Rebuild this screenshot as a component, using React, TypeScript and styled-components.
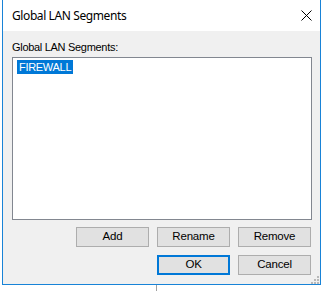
import React from "react";
import styled, { createGlobalStyle } from "styled-components";

const GlobalStyle = createGlobalStyle`
  html, body {
    margin: 0;
    padding: 0;
    background: #ffffff;
  }
`;

const Window = styled.div`
  box-sizing: border-box;
  margin-left: 2px;
  width: 319px;
  height: 285px;
  border: 1px solid #1883d7;
  border-top: none;
  display: flex;
  flex-direction: column;
  background: #f0f0f0;
`;

const TitleBar = styled.div`
  box-sizing: border-box;
  height: 31px;
  background: #ffffff;
  display: flex;
  align-items: center;
  justify-content: space-between;
  padding: 0 8px 1px 9px;
`;

const Title = styled.span`
  font-family: "Noto Sans", "Segoe UI", sans-serif;
  font-size: 12px;
  letter-spacing: -0.4px;
  color: #000000;
`;

const CloseButton = styled.div`
  width: 12px;
  height: 12px;
  display: flex;
  align-items: center;
  justify-content: center;
`;

const Body = styled.div`
  flex: 1;
  display: flex;
  flex-direction: column;
  padding: 10px 8px 0 9px;
  position: relative;
  font-family: "Liberation Sans", Arial, sans-serif;
  font-size: 11px;
  letter-spacing: -0.3px;
  color: #000000;
`;

const Label = styled.div`
  height: 13px;
  line-height: 13px;
  margin-bottom: 3px;
`;

const ListBox = styled.div`
  box-sizing: border-box;
  width: 300px;
  height: 163px;
  background: #ffffff;
  border: 1px solid #828790;
  padding: 2px 4px;
`;

const Item = styled.span<{ $selected?: boolean }>`
  display: inline-block;
  height: 14px;
  line-height: 14px;
  padding: 0 2px;
  background: ${(p) => (p.$selected ? "#0078d7" : "transparent")};
  color: ${(p) => (p.$selected ? "#ffffff" : "#000000")};
`;

const ButtonRow = styled.div<{ $top: number }>`
  display: flex;
  justify-content: flex-end;
  gap: 8px;
  margin-top: ${(p) => p.$top}px;
  padding-right: 1px;
`;

const Button = styled.button<{ $default?: boolean }>`
  box-sizing: border-box;
  width: 73px;
  height: 20px;
  margin: 0;
  padding: 0;
  background: #e1e1e1;
  border: ${(p) => (p.$default ? "2px solid #0078d7" : "1px solid #adadad")};
  font-family: "Liberation Sans", Arial, sans-serif;
  font-size: 11.5px;
  letter-spacing: -0.2px;
  color: #000000;
  line-height: 1;
`;

const Grip = styled.svg`
  position: absolute;
  right: 1px;
  bottom: 0;
`;

const BackLine = styled.div`
  margin-left: 156px;
  width: 1px;
  height: 6px;
  background: #a0a0a0;
`;

const App = () => {
  return (
    <>
      <GlobalStyle />
      <Window>
        <TitleBar>
          <Title>Global LAN Segments</Title>
          <CloseButton>
            <svg width="11" height="11" viewBox="0 0 11 11">
              <path d="M0.5 0.5 L10.5 10.5 M10.5 0.5 L0.5 10.5" stroke="#000" strokeWidth="1" />
            </svg>
          </CloseButton>
        </TitleBar>
        <Body>
          <Label>Global LAN Segments:</Label>
          <ListBox>
            <Item $selected>FIREWALL</Item>
          </ListBox>
          <ButtonRow $top={7}>
            <Button>Add</Button>
            <Button>Rename</Button>
            <Button>Remove</Button>
          </ButtonRow>
          <ButtonRow $top={8}>
            <Button $default>OK</Button>
            <Button>Cancel</Button>
          </ButtonRow>
          <Grip width="8" height="8" viewBox="0 0 8 8">
            {[
              [6, 0],
              [3, 3],
              [6, 3],
              [0, 6],
              [3, 6],
              [6, 6],
            ].map(([x, y]) => (
              <rect key={`${x}-${y}`} x={x} y={y} width="2" height="2" fill="#b8b8b8" />
            ))}
          </Grip>
        </Body>
      </Window>
      <BackLine />
    </>
  );
};

export default App;
